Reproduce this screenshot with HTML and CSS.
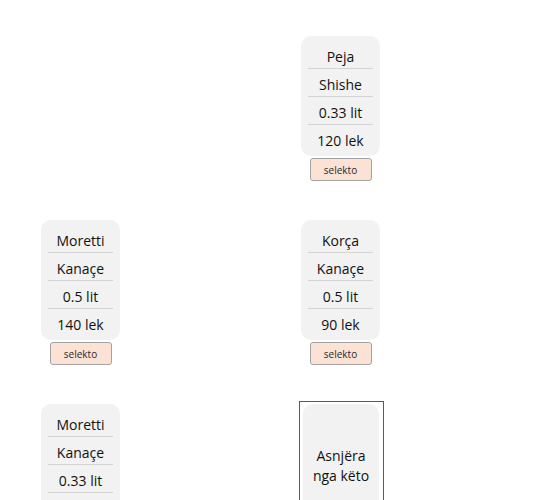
FILE: index.html
```html
<!DOCTYPE html>
<html lang="sq">
<head>
<meta charset="utf-8">
<title>Zgjidh</title>
<link rel="stylesheet" href="styles.css">
</head>
<body>
<div class="grid">
  <div class="cell empty"></div>
  <div class="cell">
    <div class="card">
      <div class="row">Peja</div>
      <div class="row">Shishe</div>
      <div class="row">0.33 lit</div>
      <div class="row">120 lek</div>
    </div>
    <button class="btn">selekto</button>
  </div>
  <div class="cell">
    <div class="card">
      <div class="row">Moretti</div>
      <div class="row">Kanaçe</div>
      <div class="row">0.5 lit</div>
      <div class="row">140 lek</div>
    </div>
    <button class="btn">selekto</button>
  </div>
  <div class="cell">
    <div class="card">
      <div class="row">Korça</div>
      <div class="row">Kanaçe</div>
      <div class="row">0.5 lit</div>
      <div class="row">90 lek</div>
    </div>
    <button class="btn">selekto</button>
  </div>
  <div class="cell">
    <div class="card">
      <div class="row">Moretti</div>
      <div class="row">Kanaçe</div>
      <div class="row">0.33 lit</div>
      <div class="row">110 lek</div>
    </div>
    <button class="btn">selekto</button>
  </div>
  <div class="cell">
    <div class="selected">
      <div class="card none">Asnjëra<br>nga këto</div>
    </div>
  </div>
</div>
</body>
</html>
```
FILE: styles.css
```css
html, body {
  margin: 0;
  padding: 0;
  background: #ffffff;
  font-family: "Open Sans", "Noto Sans", sans-serif;
  color: #111111;
}
.grid {
  display: grid;
  grid-template-columns: 79px 79px;
  column-gap: 181px;
  row-gap: 39px;
  padding: 36px 0 0 41px;
}
.cell {
  display: flex;
  flex-direction: column;
  align-items: center;
  width: 79px;
}
.card {
  box-sizing: border-box;
  width: 79px;
  background: #f2f2f2;
  border-radius: 10px;
  padding: 5px 7px 3px;
}
.row {
  height: 28px;
  line-height: 31px;
  text-align: center;
  font-size: 14px;
  border-bottom: 1px solid #d4d4d4;
  box-sizing: border-box;
}
.row:last-child {
  border-bottom: none;
}
.btn {
  margin-top: 2px;
  width: 62px;
  height: 23px;
  padding: 0;
  background: #fbe2d5;
  border: 1px solid #a3a3a3;
  border-radius: 3px;
  font-family: "Open Sans", "Noto Sans", sans-serif;
  font-size: 10px;
  color: #2a2a2a;
}
.selected {
  align-self: flex-start;
  margin: -3px 0 0 -2px;
  border: 1px solid #2e62b0;
  padding: 2px 4px 0 3px;
}
.card.none {
  width: 76px;
  height: 122px;
  display: flex;
  align-items: center;
  justify-content: center;
  text-align: center;
  font-size: 14px;
  line-height: 20px;
  padding: 2px 0 0;
}
```
